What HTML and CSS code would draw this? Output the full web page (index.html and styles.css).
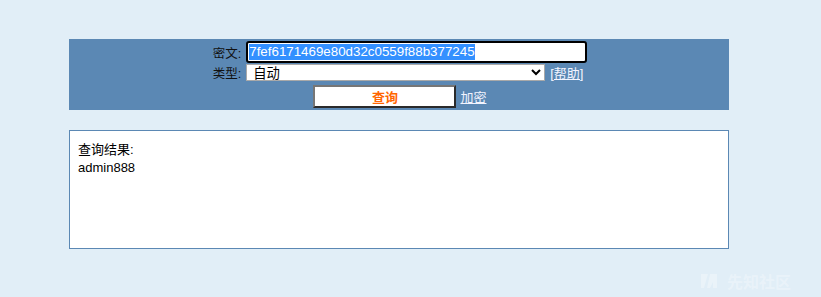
FILE: index.html
```html
<!DOCTYPE html>
<html lang="zh-CN">
<head>
<meta charset="utf-8">
<title>MD5查询</title>
<link rel="stylesheet" href="styles.css">
</head>
<body>
<div class="page">
  <div class="panel">
    <div class="form">
      <label class="lbl">密文:</label>
      <div class="field">
        <div class="fake-input"><span class="sel">7fef6171469e80d32c0559f88b377245</span></div>
      </div>
      <label class="lbl">类型:</label>
      <div class="field">
        <select class="type">
          <option>自动</option>
        </select>
        <a class="link" href="#">[帮助]</a>
      </div>
      <div class="actions">
        <button class="btn" type="button">查询</button>
        <a class="link" href="#">加密</a>
      </div>
    </div>
  </div>
  <div class="result">
    <div class="line">查询结果:</div>
    <div class="line">admin888</div>
  </div>
</div>
<div class="watermark">
  <svg class="wm-logo" width="20" height="18" viewBox="0 0 20 18" aria-hidden="true">
    <path d="M1 2 L8 2 L4 16 L1 16 Z M10 2 L17 2 L17 16 L13 16 L13 10 L10 16 L7 16 Z" fill="rgba(255,255,255,0.3)"/>
  </svg>
  <span>先知社区</span>
</div>
</body>
</html>
```
FILE: styles.css
```css
html, body {
  margin: 0;
  padding: 0;
}
body {
  background: #e1eef7;
  width: 821px;
  height: 297px;
  overflow: hidden;
  font-family: "Liberation Sans", "Noto Sans CJK SC", sans-serif;
  font-size: 13px;
  color: #000;
  position: relative;
}
.page {
  margin-left: 69px;
  padding-top: 39px;
  width: 660px;
}
.panel {
  background: #5b88b4;
  height: 71px;
  box-sizing: border-box;
  padding-top: 2px;
  padding-left: 2px;
}
.form {
  display: grid;
  grid-template-columns: auto auto;
  justify-content: center;
  column-gap: 5px;
  align-items: center;
}
.lbl {
  text-align: right;
  font-size: 12.5px;
  color: #111;
}
.field {
  display: flex;
  align-items: center;
  gap: 5px;
}
.fake-input {
  width: 341px;
  height: 22px;
  box-sizing: border-box;
  border: 2px solid #000;
  border-radius: 3px;
  background: #fff;
  padding-left: 1px;
  display: flex;
  align-items: center;
  font-size: 13.333px;
  font-family: "Liberation Sans", sans-serif;
}
.sel {
  background: #3390ff;
  color: #fff;
  line-height: 16px;
}
.type {
  width: 299px;
  height: 17px;
  margin: 0;
  box-sizing: border-box;
  border: 1px solid #a9a9a9;
  border-radius: 0;
  background: #fff;
  font-size: 13.333px;
  padding: 0 0 0 2px;
  font-family: "Liberation Sans", "Noto Sans CJK SC", sans-serif;
  color: #000;
}
.link {
  color: #f2f4ff;
  text-decoration: underline;
  font-size: 13px;
}
.actions {
  grid-column: 1 / 3;
  display: flex;
  justify-content: center;
  align-items: center;
  gap: 4px;
  margin-top: 3px;
}
.btn {
  width: 143px;
  height: 23px;
  box-sizing: border-box;
  background: #fff;
  border-style: solid;
  border-width: 2px;
  border-color: #767676 #2a2a2a #2a2a2a #767676;
  color: #ff6600;
  font-weight: bold;
  font-size: 13px;
  font-family: "Noto Sans CJK SC", sans-serif;
  padding: 0;
  line-height: 17px;
}
.result {
  margin-top: 20px;
  height: 119px;
  box-sizing: border-box;
  background: #fff;
  border: 1px solid #5b88b4;
  padding: 10px 8px;
  font-size: 13px;
}
.line {
  line-height: 18px;
}
.watermark {
  position: absolute;
  left: 700px;
  top: 271px;
  font-size: 16px;
  color: rgba(255, 255, 255, 0.3);
  font-family: "Noto Sans CJK SC", sans-serif;
  font-weight: bold;
  display: flex;
  align-items: center;
  gap: 7px;
  line-height: 20px;
}
```
